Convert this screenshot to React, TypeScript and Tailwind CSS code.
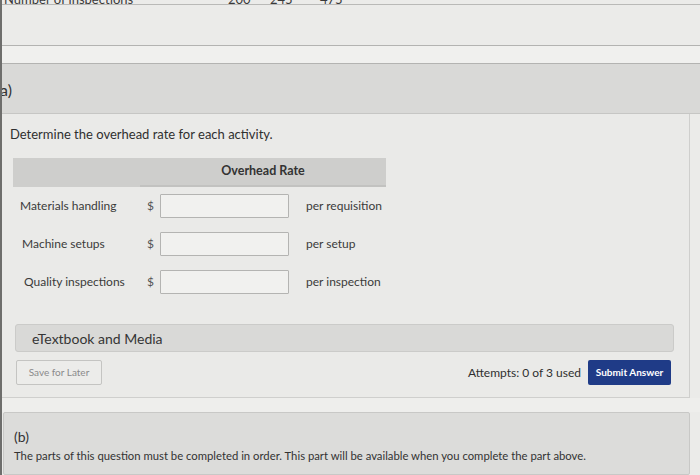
import React from "react";

const rows = [
  { label: "Materials handling", unit: "per requisition", pl: "pl-[7px]" },
  { label: "Machine setups", unit: "per setup", pl: "pl-[9px]" },
  { label: "Quality inspections", unit: "per inspection", pl: "pl-[11px]" },
];

export default function App() {
  return (
    <div
      className="w-[700px] h-[475px] overflow-hidden bg-[#ebebe9] text-[#2c2c2c] flex flex-col border-l-[2px] border-[#6e6e6c]"
      style={{ fontFamily: "Lato, 'Open Sans', sans-serif" }}
    >
      {/* cut-off table row at top */}
      <div className="h-[5px] overflow-hidden border-b border-[#b9b9b7] shrink-0">
        <div className="-mt-[9px] flex text-[13px] text-[#3a3a3a] leading-[16px]">
          <span className="w-[226px] pl-[2px]">Number of inspections</span>
          <span className="w-[42px]">200</span>
          <span className="w-[50px]">245</span>
          <span>475</span>
        </div>
      </div>
      <div className="h-[41px] shrink-0 bg-[#ebebe9] border-b border-[#b3b3b1]" />
      <div className="h-[18px] shrink-0 bg-[#f0f0ee] border-b border-[#b3b3b1]" />
      {/* part header */}
      <div className="h-[50px] shrink-0 bg-[#d9d9d7] flex items-center border-b border-[#c6c6c4]">
        <span className="text-[16px] -ml-[6px] mt-[2px] text-[#333]">(a)</span>
      </div>

      {/* main card */}
      <div className="h-[284px] shrink-0 bg-[#eaeae8] border-b border-r border-[#cfcfcd] mr-[10px] flex flex-col">
        <div className="pl-[8px] pt-[12px] text-[13px] text-[#2f2f2f] leading-[16px]">
          Determine the overhead rate for each activity.
        </div>

        <div className="ml-[11px] mt-[16px] w-[373px]">
          <div className="h-[29px] bg-[#cececc] flex">
            <div className="w-[127px]" />
            <div className="w-[246px] flex items-center justify-center text-[12.5px] font-bold text-[#333] border-b-[2px] border-[#c2c2c0]">
              Overhead Rate
            </div>
          </div>
          <div className="flex flex-col pt-[7px] gap-[14px]">
            {rows.map((r) => (
              <div key={r.label} className="flex items-center h-[24px]">
                <div className={`w-[134px] ${r.pl} text-[12px] text-[#3a3a3a]`}>{r.label}</div>
                <div className="w-[13px] text-[12px] text-[#555]">$</div>
                <div className="w-[129px] h-[24px] bg-[#f1f1ef] border border-[#b4b4b2] rounded-[1px]" />
                <div className="pl-[17px] text-[12px] text-[#3a3a3a]">{r.unit}</div>
              </div>
            ))}
          </div>
        </div>

        <div className="ml-[13px] mr-[15px] mt-[30px] h-[28px] bg-[#d9d9d7] border border-[#cbcbc9] rounded-[3px] flex items-center pl-[16px] text-[14px] text-[#353535]">
          eTextbook and Media
        </div>

        <div className="ml-[14px] mr-[18px] mt-[8px] flex items-center">
          <div className="w-[86px] h-[25px] border border-[#c4c4c2] bg-[#ececea] rounded-[2px] flex items-center justify-center text-[10px] text-[#8a8a8a]">
            Save for Later
          </div>
          <div className="flex-1" />
          <div className="text-[12px] text-[#2f2f2f] mr-[7px]">Attempts: 0 of 3 used</div>
          <div className="w-[83px] h-[25px] bg-[#1f3b87] rounded-[2px] flex items-center justify-center text-[10px] font-bold text-white">
            Submit Answer
          </div>
        </div>
      </div>

      <div className="h-[14px] shrink-0 bg-[#eeeeec]" />

      {/* part b */}
      <div className="flex-1 bg-[#dcdcda] border border-[#c8c8c6] ml-[1px] mr-[10px] rounded-[2px] px-[10px] pt-[15px]">
        <div className="text-[14px] text-[#333] leading-[18px]">(b)</div>
        <div className="mt-[2px] text-[11.3px] text-[#333] leading-[16px]">
          The parts of this question must be completed in order. This part will be available when you complete the part above.
        </div>
      </div>
    </div>
  );
}
